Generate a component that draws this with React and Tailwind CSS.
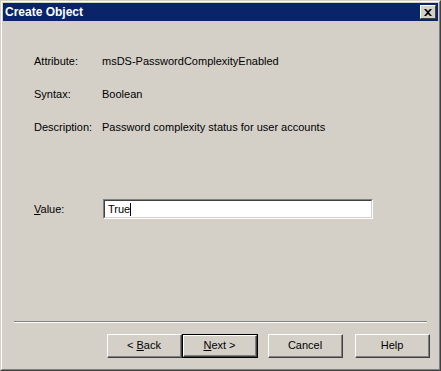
import React from 'react';

const font = { fontFamily: '"Liberation Sans", Tahoma, sans-serif' };

function Btn({ children, isDefault }) {
  if (isDefault) {
    return (
      <div className="w-[76px] h-[24px] border border-black">
        <div className="w-full h-full border-t border-l border-t-white border-l-white border-r border-b border-r-[#404040] border-b-[#404040]">
          <div className="w-full h-full border-r border-b border-r-[#808080] border-b-[#808080] flex items-center justify-center text-[11px] text-black">
            {children}
          </div>
        </div>
      </div>
    );
  }
  return (
    <div className="w-[75px] h-[24px] border-t border-l border-t-white border-l-white border-r border-b border-r-[#404040] border-b-[#404040]">
      <div className="w-full h-full border-r border-b border-r-[#808080] border-b-[#808080] flex items-center justify-center text-[11px] text-black">
        {children}
      </div>
    </div>
  );
}

function Row({ label, children, mt }) {
  return (
    <div className={`flex items-center h-[13px] text-[11px] text-black ${mt}`}>
      <div className="w-[68px] shrink-0">{label}</div>
      <div>{children}</div>
    </div>
  );
}

export default function App() {
  return (
    <div className="w-[441px] h-[371px] bg-[#d4d0c8]" style={font}>
      <div className="w-full h-full border-t border-l border-t-[#d4d0c8] border-l-[#d4d0c8] border-r border-b border-r-[#404040] border-b-[#404040]">
        <div className="w-full h-full border-t border-l border-t-white border-l-white border-r border-b border-r-[#808080] border-b-[#808080] p-px flex flex-col">
          <div className="h-[18px] bg-[#0a246a] flex items-center justify-between pl-[2px] pr-[2px]">
            <span className="text-white font-bold text-[12px] leading-none">Create Object</span>
            <div className="w-[16px] h-[14px] bg-[#d4d0c8] border-t border-l border-t-white border-l-white border-r border-b border-r-[#404040] border-b-[#404040] flex items-center justify-center">
              <svg width="8" height="7" viewBox="0 0 8 7">
                <path d="M0 0h2l2 2 2-2h2L5 3.5 8 7H6L4 5 2 7H0l3-3.5z" fill="#000" />
              </svg>
            </div>
          </div>

          <div className="flex-1 flex flex-col pl-[31px]">
            <Row label="Attribute:" mt="mt-[34px]">msDS-PasswordComplexityEnabled</Row>
            <Row label="Syntax:" mt="mt-[20px]">Boolean</Row>
            <Row label="Description:" mt="mt-[20px]">Password complexity status for user accounts</Row>

            <div className="flex items-center mt-[65px] text-[11px] text-black">
              <div className="w-[69px] shrink-0"><span className="underline">V</span>alue:</div>
              <div className="w-[270px] h-[20px] bg-white border-t border-l border-t-[#808080] border-l-[#808080] border-r border-b border-r-white border-b-white">
                <div className="w-full h-full border-t border-l border-t-[#404040] border-l-[#404040] border-r border-b border-r-[#d4d0c8] border-b-[#d4d0c8] flex items-center pl-[3px]">
                  <span>True</span>
                  <span className="w-px h-[13px] bg-black"></span>
                </div>
              </div>
            </div>
          </div>

          <div className="mx-[11px] h-[2px] border-t border-t-[#808080] border-b border-b-white"></div>
          <div className="flex pl-[104px] mt-[11px] mb-[10px]">
            <Btn><span>&lt; <span className="underline">B</span>ack</span></Btn>
            <Btn isDefault><span><span className="underline">N</span>ext &gt;</span></Btn>
            <div className="ml-[10px]"><Btn>Cancel</Btn></div>
            <div className="ml-[12px]"><Btn>Help</Btn></div>
          </div>
        </div>
      </div>
    </div>
  );
}
